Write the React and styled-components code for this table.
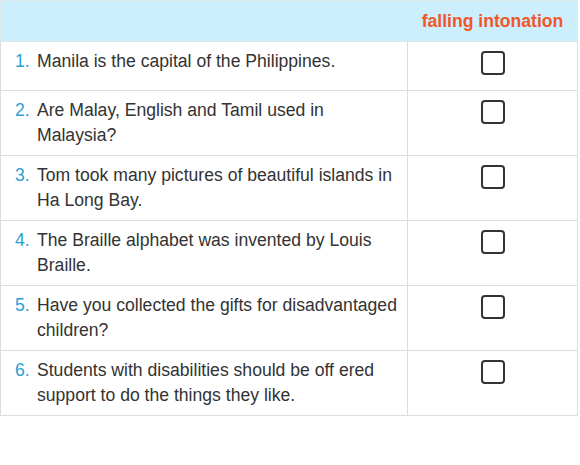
import React from "react";
import styled, { createGlobalStyle } from "styled-components";

const GlobalStyle = createGlobalStyle`
  body {
    margin: 0;
    background: #fff;
    font-family: "Liberation Sans", Arial, sans-serif;
  }
`;

const Table = styled.table`
  width: 578px;
  border-collapse: collapse;
  font-size: 17.6px;
  line-height: 25px;
  color: #333;
`;

const HeadCell = styled.th`
  background: #cdeefc;
  border: 1px solid #dde6ea;
  padding: 8px 8px 7px;
  font-weight: bold;
  color: #f0582a;
  text-align: center;
  width: ${(p) => (p.$wide ? "auto" : "153px")};
`;

const Cell = styled.td`
  border: 1px solid #ddd;
  padding: ${(p) => (p.$center ? "7px 8px" : "7px 6px 7px 14px")};
  vertical-align: top;
  text-align: ${(p) => (p.$center ? "center" : "left")};
`;

const Sentence = styled.div`
  display: flex;
`;

const Num = styled.span`
  flex: 0 0 22px;
  color: #2a9fd8;
`;

const BoxWrap = styled.div`
  height: 34px;
  display: flex;
  justify-content: center;
  align-items: flex-start;
`;

const Box = styled.span`
  display: block;
  margin-top: 2px;
  width: 20px;
  height: 20px;
  border: 2px solid #333;
  border-radius: 4px;
`;

const sentences = [
  "Manila is the capital of the Philippines.",
  "Are Malay, English and Tamil used in Malaysia?",
  "Tom took many pictures of beautiful islands in Ha Long Bay.",
  "The Braille alphabet was invented by Louis Braille.",
  "Have you collected the gifts for disadvantaged children?",
  "Students with disabilities should be off ered support to do the things they like.",
];

export default function App() {
  return (
    <>
      <GlobalStyle />
      <Table>
        <thead>
          <tr>
            <HeadCell $wide></HeadCell>
            <HeadCell>falling intonation</HeadCell>
          </tr>
        </thead>
        <tbody>
          {sentences.map((s, i) => (
            <tr key={i}>
              <Cell>
                <Sentence>
                  <Num>{i + 1}.</Num>
                  <span>{s}</span>
                </Sentence>
              </Cell>
              <Cell $center>
                <BoxWrap>
                  <Box />
                </BoxWrap>
              </Cell>
            </tr>
          ))}
        </tbody>
      </Table>
    </>
  );
}
